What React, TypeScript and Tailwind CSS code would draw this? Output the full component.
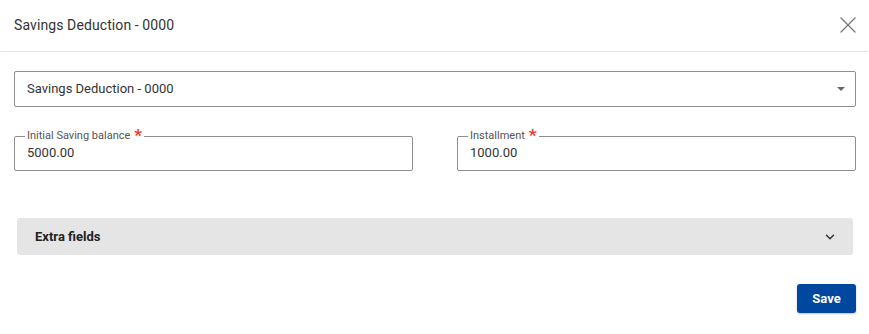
import { ChevronDown, X } from 'lucide-react'

function OutlinedField({ label, value }: { label: string; value: string }) {
  return (
    <div className="relative flex-1 h-[35px] border border-[#8f8f8f] rounded-[2px] pl-[12px] pt-[7px]">
      <div className="absolute top-[-7px] left-[10px] px-[2px] bg-white flex items-start text-[11px] leading-[12px] text-[#555]">
        <span>{label}</span>
        <span className="ml-[4px] text-[#f0392b] text-[17px] leading-[12px] font-bold mt-[-1px]">*</span>
      </div>
      <div className="text-[13px] leading-[18px] text-[#333]">{value}</div>
    </div>
  )
}

export default function App() {
  return (
    <div className="w-[869px] h-[334px] bg-white font-['Roboto',sans-serif] text-[#333]">
      <div className="h-[52px] flex items-center justify-between pl-[13px] pr-[6px] border-b border-[#e3e3e6] mx-[1px]">
        <span className="text-[14px] tracking-[0.1px] text-[#333] -mt-[1px]">Savings Deduction - 0000</span>
        <X className="w-[28px] h-[28px] text-[#777] -mt-[2px]" strokeWidth={1.1} />
      </div>
      <div className="pl-[14px] pr-[13px]">
        <div className="mt-[19px] h-[36px] border border-[#8f8f8f] rounded-[2px] flex items-center justify-between pl-[12px] pr-[10px]">
          <span className="text-[13px] text-[#333]">Savings Deduction - 0000</span>
          <span className="w-0 h-0 border-l-[4px] border-r-[4px] border-t-[4px] border-l-transparent border-r-transparent border-t-[#666]" />
        </div>
        <div className="mt-[29px] flex gap-[44px]">
          <OutlinedField label="Initial Saving balance" value="5000.00" />
          <OutlinedField label="Installment" value="1000.00" />
        </div>
        <div className="mt-[47px] mx-[3px] h-[37px] bg-[#e5e5e5] rounded-[3px] flex items-center justify-between pl-[18px] pr-[16px]">
          <span className="text-[13px] font-bold text-[#222]">Extra fields</span>
          <ChevronDown className="w-[14px] h-[14px] text-[#333]" strokeWidth={2.5} />
        </div>
        <div className="mt-[29px] flex justify-end">
          <button className="w-[59px] h-[29px] bg-[#0047a0] text-white text-[13px] font-bold rounded-[3px] shadow-[0_1px_2px_rgba(0,0,0,0.25)]">
            Save
          </button>
        </div>
      </div>
    </div>
  )
}
